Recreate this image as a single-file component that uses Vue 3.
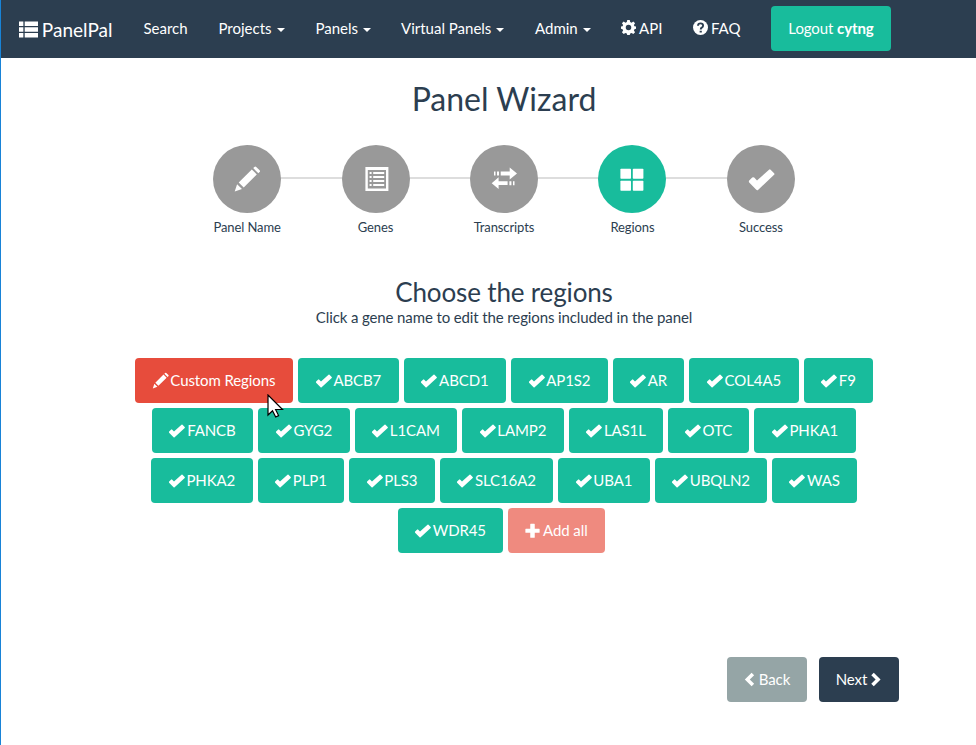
<script setup>
import { h } from 'vue'

const shapes = {
  ok: '<path d="M.2 13.600 3.200 10.600Q4.200 9.700 5.200 10.600L8 13.500 20 2.700Q20.800 1.900 21.600 2.700L25.100 6.200Q25.900 7 25.100 7.800L9 22.900Q8.100 23.700 7.300 22.800L.2 15.400Q-.5 14.500.2 13.600Z"/>',
  pencil: '<path d="M-.3 24.600 2.100 17.200 7 22.100ZM3.700 15.500 16.800 2.400 21.800 7.400 8.700 20.500ZM18.200 1.100 19.400-.1Q20.300-1 21.200-.1L24.600 3.300Q25.500 4.200 24.600 5.100L23.300 6.300Z"/>',
  list: '<path fill-rule="evenodd" d="M1.400 0H24.400V24H1.400ZM3.800 3V21.500H22V3Z"/><path d="M5.600 5h2v2h-2ZM9.200 5h11v2h-11ZM5.600 9h2v2h-2ZM9.200 9h11v2h-11ZM5.600 13h2v2h-2ZM9.200 13h11v2h-11ZM5.600 17h2v2h-2ZM9.200 17h11v2h-11Z"/>',
  transfer: '<path d="M2 4.400h1.500v4H2ZM5 4.400h2v4H5ZM8.700 4.400h9V.4L25 6.400 17.700 12.400v-4h-9ZM22.500 14.200H21v4h1.500ZM19.400 14.200h-2v4h2ZM15.600 14.200h-9v-4L-.3 16.200 6.600 22v-4h9Z"/>',
  large: '<rect x=".4" y="1.800" width="10.600" height="10" rx=".7"/><rect x="12.800" y="1.800" width="10.600" height="10" rx=".7"/><rect x=".4" y="13.700" width="10.600" height="10" rx=".7"/><rect x="12.800" y="13.700" width="10.600" height="10" rx=".7"/>',
  thlist: '<path d="M0 2h5.500v5.500H0ZM7.200 2H24v5.500H7.200ZM0 9.200h5.500v5.500H0ZM7.200 9.200H24v5.500H7.200ZM0 16.500h5.500V22H0ZM7.200 16.500H24V22H7.200Z"/>',
  plus: '<path d="M9.200 1h5.600q.8 0 .8.800V9h7q.8 0 .8.800v5q0 .8-.8.800h-7v7q0 .8-.8.800H9.200q-.8 0-.8-.8v-7h-7q-.8 0-.8-.8v-5Q.6 9 1.400 9h7V1.800q0-.8.8-.8Z"/>',
  left: '<path d="M12.200 1.100 16.200 5.100 9.200 12 16.200 18.900 12.200 22.900 1.300 12Z"/>',
  right: '<path d="M10.800 1.100 6.800 5.100 13.800 12 6.800 18.900 10.800 22.900 21.700 12Z"/>',
  question: '<circle cx="12" cy="12" r="12"/><path d="M8 9.200Q8 5.400 12.100 5.400T16.100 9Q16.100 11 14 12.200 12.400 13.200 12.400 15M10.600 18.600h3.500" fill="none" stroke="#2c3e50" stroke-width="3.100"/>',
  cog: '<path fill-rule="evenodd" d="M10 0h4l.7 3.300 2.200.9L19.700 2.300l2.800 2.800-1.900 2.800.9 2.100L24 10.500v3.500l-2.500.7-.9 2.200 1.900 2.800-2.800 2.800-2.800-1.900-2.200.9L14 24h-4l-.7-2.500-2.200-.9-2.800 1.900-2.800-2.800 1.900-2.800-.9-2.200L0 14v-3.500l2.500-.5.9-2.100L1.500 5.100 4.300 2.300l2.800 1.900 2.200-.9ZM12 7.600A4.400 4.400 0 1 0 12 16.400 4.400 4.400 0 1 0 12 7.600Z"/>'
}
const Icon = (props) => h('svg', { class: 'icon', viewBox: '0 0 24 24', fill: 'currentColor', 'aria-hidden': 'true', innerHTML: shapes[props.name] })
Icon.props = ['name']

const menu = [
  { label: 'Search', width: 75 },
  { label: 'Projects', caret: true, width: 97 },
  { label: 'Panels', caret: true, width: 85.5 },
  { label: 'Virtual Panels', caret: true, width: 134 },
  { label: 'Admin', caret: true, width: 86 },
  { label: 'API', icon: 'cog', width: 72 },
  { label: 'FAQ', icon: 'question', width: 63 }
]
const steps = [
  { label: 'Panel Name', icon: 'pencil' },
  { label: 'Genes', icon: 'list' },
  { label: 'Transcripts', icon: 'transfer' },
  { label: 'Regions', icon: 'large', active: true },
  { label: 'Success', icon: 'ok' }
]
const rows = [
  [['Custom Regions', 158, 'pencil', 'danger'], ['ABCB7', 101], ['ABCD1', 102], ['AP1S2', 97], ['AR', 71], ['COL4A5', 110], ['F9', 69]],
  [['FANCB', 101], ['GYG2', 92], ['L1CAM', 102], ['LAMP2', 102], ['LAS1L', 94], ['OTC', 81], ['PHKA1', 102]],
  [['PHKA2', 102], ['PLP1', 86], ['PLS3', 86], ['SLC16A2', 113], ['UBA1', 92], ['UBQLN2', 112], ['WAS', 85]],
  [['WDR45', 105], ['Add all', 97, 'plus', 'danger faded']]
]
</script>

<template>
  <div class="page">
    <nav class="navbar">
      <a class="brand"><Icon name="thlist" /> PanelPal</a>
      <a v-for="m in menu" :key="m.label" class="nav-link" :style="{ width: m.width + 'px' }"><Icon v-if="m.icon" :name="m.icon" />{{ m.label }}<span v-if="m.caret" class="caret"></span></a>
      <button class="btn logout">Logout <b>cytng</b></button>
    </nav>
    <main class="wizard">
      <h1>Panel Wizard</h1>
      <div class="steps">
        <div v-for="s in steps" :key="s.label" class="step">
          <span class="circle" :class="{ active: s.active }"><Icon :name="s.icon" /></span>
          <span class="step-label">{{ s.label }}</span>
        </div>
      </div>
      <h2>Choose the regions</h2>
      <p class="hint">Click a gene name to edit the regions included in the panel</p>
      <div class="genes">
        <div v-for="(row, i) in rows" :key="i" class="gene-row">
          <button v-for="[name, width, icon, kind] in row" :key="name" class="btn" :class="kind" :style="{ width: width + 'px' }"><Icon :name="icon || 'ok'" />{{ name }}</button>
        </div>
        <svg class="pointer" width="17" height="24" viewBox="0 0 17 24"><path d="M1 1V21L5.500 16.700 8.700 23 11.600 21.600 8.600 15.500H15.500Z" fill="#fff" stroke="#000" stroke-width="1.200" /></svg>
      </div>
      <div class="actions">
        <button class="btn back"><Icon name="left" />Back</button>
        <button class="btn next">Next<Icon name="right" /></button>
      </div>
    </main>
  </div>
</template>

<style>
body { margin: 0; background: #fff; }
</style>
<style scoped>
.page { box-sizing: border-box; height: 745px; overflow: hidden; border-left: 1px solid #1883d7; font: 15px/21px Lato, sans-serif; color: #2c3e50; }
.navbar { box-sizing: border-box; display: flex; align-items: center; height: 58px; padding-bottom: 1px; background: #2c3e50; color: #fff; }
.brand { box-sizing: border-box; width: 127.500px; font-size: 19px; padding: 1px 0 0 18px; white-space: nowrap; }
.brand .icon { margin-right: -1px; vertical-align: -2px; }
.nav-link { box-sizing: border-box; flex: none; padding-left: 15px; white-space: nowrap; }
.nav-link .icon { margin-right: 3px; vertical-align: -1px; }
.caret { display: inline-block; margin-left: 5px; vertical-align: middle; border: 4px solid transparent; border-top-color: #fff; border-bottom: 0; }
.icon { display: inline-block; flex: none; width: 1em; height: 1em; vertical-align: -1px; overflow: visible; }
.btn { box-sizing: border-box; display: flex; align-items: center; justify-content: center; height: 45px; padding: 0; border: 0; border-radius: 4px; background: #18bc9c; color: #fff; font: 15px/21px Lato, sans-serif; letter-spacing: -.1px; white-space: pre; }
.gene-row .icon { margin-right: 2.700px; }
.logout { width: 120px; margin-left: 30px; }
.wizard { padding-left: 30px; width: 946px; }
h1, h2, p { margin: 0; font-weight: 400; text-align: center; }
h1 { font-size: 32px; line-height: 40px; padding-top: 21px; }
.steps { display: flex; justify-content: space-between; width: 581.8px; margin: 26px auto 0; position: relative; }
.steps::before { content: ''; position: absolute; top: 32px; left: 34px; right: 34px; height: 2px; background: #ddd; }
.step { width: 68px; display: flex; flex-direction: column; align-items: center; position: relative; }
.circle { width: 68px; height: 68px; border-radius: 50%; background: #999; color: #fff; font-size: 24px; display: flex; align-items: center; justify-content: center; }
.circle.active { background: #18bc9c; }
.step-label { font-size: 13px; line-height: 18px; margin-top: 5px; letter-spacing: -.1px; white-space: nowrap; }
h2 { font-size: 26px; line-height: 30px; margin-top: 41px; letter-spacing: -.15px; }
.hint { letter-spacing: -.12px; }
.genes { position: relative; display: flex; flex-direction: column; gap: 5px; width: 750px; margin: 30px auto 0; }
.gene-row { display: flex; justify-content: center; gap: 5px; }
.gene-row:last-of-type { padding-right: 5px; }
.pointer { position: absolute; left: 137.500px; top: 35.500px; z-index: 2; }
.danger { background: #e74c3c; }
.faded { opacity: .65; }
.actions { display: flex; justify-content: flex-end; gap: 12px; margin: 104px 78px 0 0; }
.actions .btn { width: 80px; }
.back { background: #95a5a6; }
.next { background: #2c3e50; }
</style>
